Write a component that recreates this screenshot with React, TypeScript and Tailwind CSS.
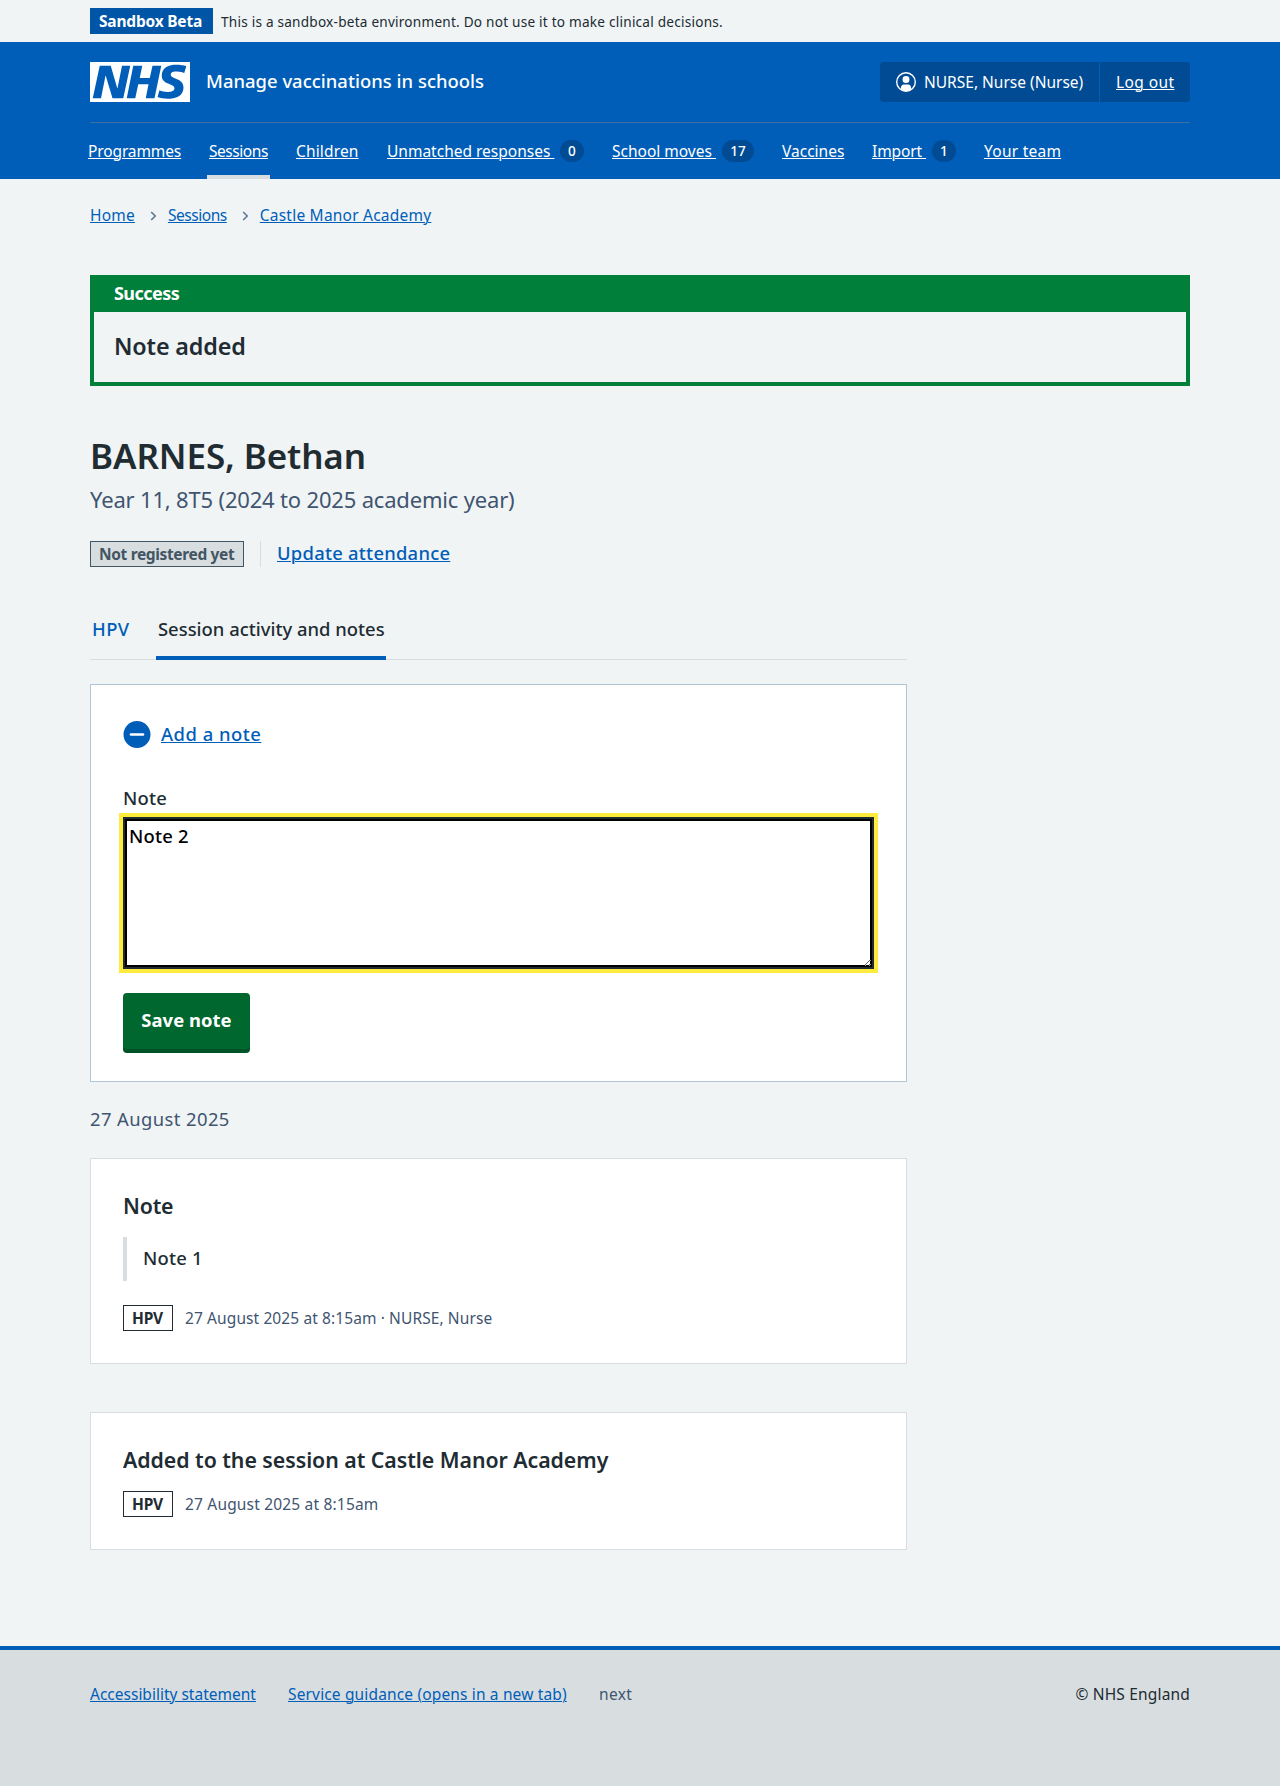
import type { ReactNode } from "react";

const link = "text-[#005eb8] underline decoration-1 underline-offset-1";

type NavItem = { label: string; box: string; tracking: string; count?: string; badge?: string; current?: boolean };

const navItems: NavItem[] = [
  { label: "Programmes", box: "w-[97px]", tracking: "tracking-[-0.12px]" },
  { label: "Sessions", box: "w-[63px]", tracking: "tracking-[-0.45px]", current: true },
  { label: "Children", box: "w-[67px]", tracking: "tracking-[0.15px]" },
  { label: "Unmatched responses ", box: "w-[201px]", tracking: "tracking-normal", count: "0", badge: "w-6" },
  { label: "School moves ", box: "w-[146px]", tracking: "tracking-normal", count: "17", badge: "w-8" },
  { label: "Vaccines", box: "w-[66px]", tracking: "tracking-normal" },
  { label: "Import ", box: "w-[88px]", tracking: "tracking-[-0.1px]", count: "1", badge: "w-6" },
  { label: "Your team", box: "w-[81px]", tracking: "tracking-[0.25px]" },
];

function NhsLogo() {
  return (
    <svg className="block h-10 w-[100px]" viewBox="0 0 40 16" role="img" aria-label="NHS">
      <path fill="#fff" d="M0 0h40v16H0z" />
      <path
        fill="#005eb8"
        d="M3.9 1.5h4.4l2.6 9h.1l1.8-9h3.3l-2.8 13H9l-2.7-9h-.1l-1.8 9H1.1M17.3 1.5h3.6l-1 4.9h4L25 1.5h3.5l-2.7 13h-3.5l1.1-5.6h-4.1l-1.2 5.6h-3.4M37.7 4.4c-.7-.3-1.6-.6-2.9-.6-1.4 0-2.5.2-2.5 1.3 0 1.8 5.1 1.2 5.1 5.1 0 3.6-3.3 4.5-6.4 4.5-1.3 0-2.9-.3-4-.7l.8-2.7c.7.4 2.1.7 3.2.7s2.8-.2 2.8-1.5c0-2.1-5.1-1.3-5.1-5 0-3.4 2.9-4.4 5.8-4.4 1.6 0 3.1.2 4 .6"
      />
    </svg>
  );
}

function UserIcon() {
  return (
    <svg className="size-5 shrink-0" viewBox="0 0 20 20" aria-hidden="true">
      <circle cx="10" cy="10" r="9.3" fill="none" stroke="#fff" strokeWidth="1.4" />
      <rect x="6.6" y="3.9" width="6.8" height="7.2" rx="3.3" fill="#fff" />
      <path fill="#fff" d="M4.8 17.2c0-3 1-4.6 3.2-4.6h4c2.2 0 3.2 1.6 3.2 4.6-1.5 1.3-3.3 2-5.2 2s-3.7-.7-5.2-2z" />
    </svg>
  );
}

function Chevron() {
  return (
    <svg className="mr-[11px] ml-[15px] h-6 w-[7px]" viewBox="0 0 7 24" aria-hidden="true">
      <path d="M1.2 9l4 4-4 4" fill="none" stroke="#5b7896" strokeWidth="1.6" />
    </svg>
  );
}

function Tag({ className, children }: { className: string; children: ReactNode }) {
  return (
    <strong className={`block h-[26px] shrink-0 border px-2 text-[15.5px] leading-6 font-bold whitespace-nowrap ${className}`}>
      {children}
    </strong>
  );
}

function Header() {
  return (
    <header className="h-[137px] bg-[#005eb8] px-[90px] text-white">
      <div className="flex h-[81px] items-start justify-between border-b border-[#3b70a6] pt-5">
        <div className="flex">
          <NhsLogo />
          <span className="ml-4 text-[18.4px] leading-[38px] font-medium tracking-[0.03px]">Manage vaccinations in schools</span>
        </div>
        <div className="flex h-10 w-[310px] overflow-hidden rounded bg-[#004b93] text-[15.5px] leading-10 whitespace-nowrap">
          <div className="flex w-[220px] items-center border-r border-[#005eb8] pl-4">
            <UserIcon />
            <span className="ml-2">NURSE, Nurse (Nurse)</span>
          </div>
          <a className="ml-4 tracking-[0.4px] underline decoration-1 underline-offset-1">Log out</a>
        </div>
      </div>
      <nav className="-ml-1 flex h-14 gap-6">
        {navItems.map((n) => (
          <a
            key={n.label}
            className={`flex h-14 shrink-0 items-start px-0.5 pt-4 text-[15.5px] leading-6 whitespace-pre ${n.box} ${n.current ? "border-b-4 border-[#d8dde0]" : ""}`}
          >
            <span className={`underline decoration-1 underline-offset-1 ${n.tracking}`}>{n.label}</span>
            {n.count && (
              <span className={`mt-px ml-auto block h-[22px] rounded-full bg-[#004b93] text-center text-[13.6px] leading-[22px] font-medium ${n.badge}`}>
                {n.count}
              </span>
            )}
          </a>
        ))}
      </nav>
    </header>
  );
}

export default function App() {
  return (
    <div className="h-[1786px] w-[1280px] overflow-hidden bg-[#f0f4f5] font-['Noto_Sans',sans-serif] text-[18.4px] leading-7 text-[#212b32]">
      <div className="flex h-[42px] items-baseline px-[90px] pt-2">
        <Tag className="w-[123px] border-[#0055a6] bg-[#0055a6] tracking-[-0.2px] text-white">Sandbox Beta</Tag>
        <span className="ml-2 text-[13.6px] leading-6 tracking-[0.23px]">
          This is a sandbox-beta environment. Do not use it to make clinical decisions.
        </span>
      </div>

      <Header />

      <main className="px-[90px]">
        <nav className="flex pt-6 text-[15.5px] leading-6">
          <a className={`${link} tracking-[0.2px]`}>Home</a>
          <Chevron />
          <a className={`${link} tracking-[-0.45px]`}>Sessions</a>
          <Chevron />
          <a className={`${link} tracking-[0.22px]`}>Castle Manor Academy</a>
        </nav>

        <section className="mt-12 h-[111px] border-4 border-[#007f3b]">
          <h2 className="h-[33px] bg-[#007f3b] pl-5 text-[18px] font-bold tracking-[-0.55px] text-white">Success</h2>
          <h3 className="mt-[18px] pl-5 text-[23.3px] leading-8 font-semibold tracking-[-0.14px]">Note added</h3>
        </section>

        <h1 className="mt-[49px] text-[35px] leading-[42px] font-semibold tracking-[-0.1px]">BARNES, Bethan</h1>
        <p className="mt-[6px] text-[22px] leading-8 tracking-[-0.18px] text-[#3f5570]">Year 11, 8T5 (2024 to 2025 academic year)</p>

        <div className="mt-[26px] flex h-[26px]">
          <Tag className="w-[154px] border-[#425563] bg-[#d8dde0] tracking-[-0.35px] text-[#425563]">Not registered yet</Tag>
          <div className="ml-4 w-px bg-[#d8dde0]" />
          <a className={`${link} ml-4 leading-6 font-medium tracking-[0.25px]`}>Update attendance</a>
        </div>

        <div className="w-[817px]">
          <div className="mt-[47px] flex h-[46px] gap-6 shadow-[inset_0_-1px_0_#d8dde0]">
            <a className="w-[42px] pt-px pl-0.5 font-medium tracking-[0.4px] text-[#005eb8]">HPV</a>
            <a className="h-[46px] w-[230px] border-b-4 border-[#005eb8] pt-px pl-0.5 font-medium tracking-[0.01px] whitespace-nowrap">
              Session activity and notes
            </a>
          </div>

          <section className="mt-6 h-[398px] border border-[#b0c6d8] bg-white px-8 pt-[34px]">
            <div className="flex items-center">
              <svg className="mt-0.5 h-[27px] w-7" viewBox="0 0 28 27" aria-hidden="true">
                <circle cx="14" cy="13.5" r="13.5" fill="#005eb8" />
                <path d="M8 13.500h12" stroke="#fff" strokeWidth="2.6" strokeLinecap="round" />
              </svg>
              <a className={`${link} ml-2.5 font-medium tracking-[0.5px]`}>Add a note</a>
            </div>
            <label className="mt-9 block font-medium tracking-[0.25px]" htmlFor="note">
              Note
            </label>
            <textarea
              id="note"
              defaultValue="Note 2"
              className="mt-[5px] block h-[152px] w-[751px] resize-y border-2 border-[#212b32] bg-white pt-1 pl-1 leading-[26px] font-medium tracking-[0.2px] text-black shadow-[inset_0_0_0_2px_#000] outline-4 outline-[#ffeb3b]"
            />
            <button className="mt-6 block h-14 w-[127px] rounded bg-[#00682f] pb-0.5 font-bold tracking-[0.05px] text-white shadow-[0_4px_0_#005227]">
              Save note
            </button>
          </section>

          <h2 className="mt-[23px] tracking-[0.42px] text-[#3f5570]">27 August 2025</h2>

          <section className="mt-[25px] h-[206px] border border-[#d8dde0] bg-white px-8 pt-[33px]">
            <h3 className="text-[21.3px] font-semibold tracking-[-0.2px]">Note</h3>
            <blockquote className="mt-[17px] h-11 border-l-4 border-[#d8dde0] pt-[7px] pl-4 font-medium tracking-[0.2px]">Note 1</blockquote>
            <div className="mt-6 flex">
              <Tag className="w-[50px] border-[#212b32] tracking-[-0.2px]">HPV</Tag>
              <span className="mt-px ml-3 text-[15.5px] leading-6 tracking-[0.1px] text-[#3f5570]">
                27 August 2025 at 8:15am · NURSE, Nurse
              </span>
            </div>
          </section>

          <section className="mt-12 h-[138px] border border-[#d8dde0] bg-white px-8 pt-[33px]">
            <h3 className="text-[21.3px] font-semibold tracking-[-0.04px]">Added to the session at Castle Manor Academy</h3>
            <div className="mt-[17px] flex">
              <Tag className="w-[50px] border-[#212b32] tracking-[-0.2px]">HPV</Tag>
              <span className="mt-px ml-3 text-[15.5px] leading-6 tracking-[0.18px] text-[#3f5570]">27 August 2025 at 8:15am</span>
            </div>
          </section>
        </div>
      </main>

      <footer className="mt-24 flex h-[140px] border-t-4 border-[#005eb8] bg-[#d8dde0] px-[90px] pt-8 text-[15.5px] leading-6">
        <div className="w-[198px]">
          <a className={link}>Accessibility statement</a>
        </div>
        <div className="w-[311px]">
          <a className={`${link} tracking-[0.15px]`}>Service guidance (opens in a new tab)</a>
        </div>
        <span className="tracking-[0.35px] text-[#3f5570]">next</span>
        <span className="ml-auto tracking-[0.18px]">© NHS England</span>
      </footer>
    </div>
  );
}
